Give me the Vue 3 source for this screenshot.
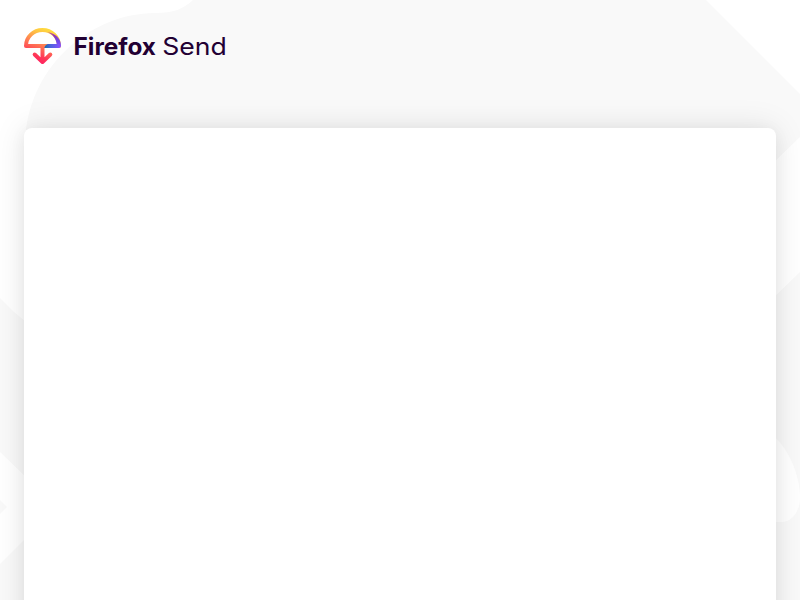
<script setup>
</script>

<template>
  <div class="page">
    <svg class="backdrop" viewBox="0 0 800 600" aria-hidden="true">
      <path d="M193 0C183 9 174 13 155 13C91 13 25 67 25 148V321L14 312L0 298V452L30 481V534L0 564V600H800V272L770 301V166L800 137V94L706 0Z" fill="#f9f9f9" />
      <path d="M0 500L7 507L0 514Z" fill="#f9f9f9" />
      <path d="M770 433C789 447 800 476 800 498C800 510 793 522 781 522H770Z" fill="#fff" />
    </svg>
    <header class="header">
      <svg class="logo" viewBox="0 0 204 38" role="img" aria-label="Firefox Send">
        <defs>
          <linearGradient id="dome" gradientUnits="userSpaceOnUse" x1="25" y1="0" x2="11" y2="36">
            <stop offset="0" stop-color="#ffe03b" />
            <stop offset=".2" stop-color="#ffc444" />
            <stop offset=".5" stop-color="#ff7854" />
            <stop offset=".78" stop-color="#ff3657" />
            <stop offset="1" stop-color="#ff1b66" />
          </linearGradient>
          <linearGradient id="edge" gradientUnits="userSpaceOnUse" x1="25" y1="4" x2="34" y2="20">
            <stop offset="0" stop-color="#c043a8" />
            <stop offset=".3" stop-color="#9033b5" />
            <stop offset=".65" stop-color="#7048e8" />
            <stop offset="1" stop-color="#8950ff" />
          </linearGradient>
          <linearGradient id="base" gradientUnits="userSpaceOnUse" x1="20" y1="0" x2="36" y2="0">
            <stop offset="0" stop-color="#0872a8" />
            <stop offset=".4" stop-color="#4c62dc" />
            <stop offset="1" stop-color="#8652ff" />
          </linearGradient>
        </defs>
        <path d="M2 18C2 9 9.3 2 18.5 2S35 9 35 18H2M18.5 18V33M10.7 26.5L18.5 34L26.3 26.5" fill="none" stroke="url(#dome)" stroke-width="4" stroke-linecap="round" stroke-linejoin="round" />
        <path d="M20.5 20C21 17.5 22.5 16 26 16H32.7C31.7 10 28.5 6 23.5 4.3C31 5 37 10.5 37 17.5C37 19.2 36.2 20 34.7 20Z" fill="url(#edge)" />
        <path d="M20.5 20C21 17.5 22.5 16 26 16H35V20Z" fill="url(#base)" />
        <text x="49.5" y="27.4" class="brand" textLength="82.5" lengthAdjust="spacingAndGlyphs">Firefox</text>
        <text x="138.2" y="27.4" class="product" textLength="64.5" lengthAdjust="spacingAndGlyphs">Send</text>
      </svg>
    </header>
    <main class="main"><section class="card"></section></main>
  </div>
</template>

<style>
body { margin: 0; overflow: hidden; background: #fff; }
</style>

<style scoped>
.page { position: relative; display: flex; flex-direction: column; box-sizing: border-box; height: 600px; overflow: hidden; background: #fff; }
.backdrop { position: absolute; inset: 0; width: 800px; height: 600px; }
.header { position: relative; flex: none; box-sizing: border-box; height: 128px; padding: 28px 24px; }
.logo { display: block; width: 204px; height: 38px; overflow: visible; }
.brand, .product { font-family: Inter, "Liberation Sans", sans-serif; font-size: 24px; fill: #220033; }
.brand { font-weight: 700; }
.product { font-weight: 400; }
.main { position: relative; flex: 1; padding: 0 24px; display: flex; }
.card { flex: 1; height: 520px; border-radius: 8px; background: #fff; box-shadow: 0 0 32px 0 rgba(12, 12, 13, .1), 0 2px 16px 0 rgba(12, 12, 13, .05); }
</style>
